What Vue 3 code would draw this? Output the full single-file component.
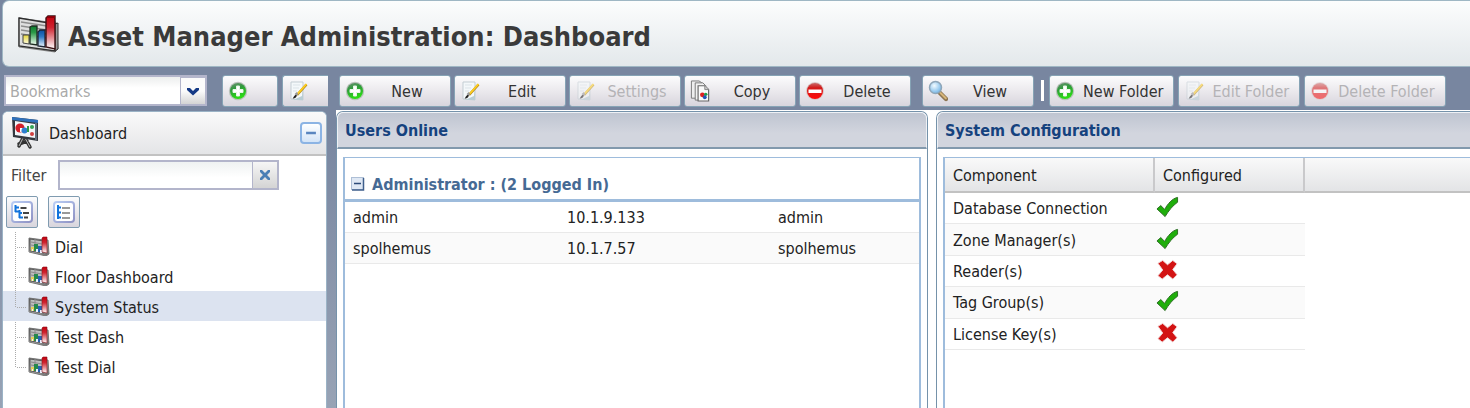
<script setup>
import { ref } from 'vue'

const bookmark = ref('')
const filter = ref('')

const actions = [
  { label: 'New', icon: 'add' },
  { label: 'Edit', icon: 'edit' },
  { label: 'Settings', icon: 'edit', disabled: true },
  { label: 'Copy', icon: 'copy' },
  { label: 'Delete', icon: 'remove' },
]

const folderActions = [
  { label: 'New Folder', icon: 'add' },
  { label: 'Edit Folder', icon: 'edit', disabled: true },
  { label: 'Delete Folder', icon: 'remove', disabled: true },
]

const tree = [
  { label: 'Dial' },
  { label: 'Floor Dashboard' },
  { label: 'System Status', selected: true, last: true },
  { label: 'Test Dash' },
  { label: 'Test Dial', last: true },
]

const users = [
  { name: 'admin', ip: '10.1.9.133', login: 'admin' },
  { name: 'spolhemus', ip: '10.1.7.57', login: 'spolhemus' },
]

const components = [
  { name: 'Database Connection', ok: true },
  { name: 'Zone Manager(s)', ok: true },
  { name: 'Reader(s)', ok: false },
  { name: 'Tag Group(s)', ok: true },
  { name: 'License Key(s)', ok: false },
]
</script>

<template>
  <div class="app">
    <svg class="defs" aria-hidden="true">
      <defs>
        <linearGradient id="g-red" x1="0" y1="0" x2="0" y2="1">
          <stop offset="0" stop-color="#c2000d" />
          <stop offset=".35" stop-color="#cf2430" />
          <stop offset="1" stop-color="#fff" />
        </linearGradient>
        <linearGradient id="g-green" x1="0" y1="0" x2="0" y2="1">
          <stop offset="0" stop-color="#0b7a2c" />
          <stop offset=".35" stop-color="#2c9a48" />
          <stop offset="1" stop-color="#f4fff4" />
        </linearGradient>
        <linearGradient id="g-blue" x1="0" y1="0" x2="0" y2="1">
          <stop offset="0" stop-color="#0a4fa0" />
          <stop offset=".4" stop-color="#2f79c4" />
          <stop offset="1" stop-color="#f0f8ff" />
        </linearGradient>
        <linearGradient id="g-yellow" x1="0" y1="0" x2="0" y2="1">
          <stop offset="0" stop-color="#e6d63a" />
          <stop offset="1" stop-color="#fffde0" />
        </linearGradient>
        <linearGradient id="g-add" x1="0" y1="0" x2="0.300" y2="1">
          <stop offset="0" stop-color="#6f8f76" />
          <stop offset=".4" stop-color="#2f9a3c" />
          <stop offset="1" stop-color="#2bdc14" />
        </linearGradient>
        <linearGradient id="g-remove" x1="0" y1="0" x2="0" y2="1">
          <stop offset="0" stop-color="#c86a6a" />
          <stop offset=".3" stop-color="#d21a1a" />
          <stop offset="1" stop-color="#ff0a0a" />
        </linearGradient>
        <radialGradient id="g-lens" cx=".4" cy=".35" r=".7">
          <stop offset="0" stop-color="#f2fbff" />
          <stop offset="1" stop-color="#6db2e6" />
        </radialGradient>
        <linearGradient id="g-metal" x1="0" y1="0" x2="1" y2="1">
          <stop offset="0" stop-color="#444" />
          <stop offset=".4" stop-color="#b8b8b8" />
          <stop offset="1" stop-color="#666" />
        </linearGradient>
        <linearGradient id="g-tile" x1="0" y1="0" x2="1" y2="1">
          <stop offset="0" stop-color="#b9cdf5" />
          <stop offset="1" stop-color="#8f92c4" />
        </linearGradient>
      </defs>
      <symbol id="chart-large" viewBox="0 0 42 38">
        <path d="M2 3 L31 7 L39 7 L41 34 L38 37 L2 32z" fill="#c4c4c4" stroke="#8a8a8a" />
        <path d="M2 3 L38 9 L38 36 L2 31z" fill="#dedede" stroke="#2e2e2e" stroke-width="1.4" />
        <path d="M38 9 L41 8 L41 34 L38 36z" fill="#999" stroke="#333" />
        <path d="M4 7l26 4M4 11l26 4M4 15l26 4M4 19l26 4" stroke="#8d8d8d" stroke-width="1.3" />
        <path d="M6 20h6v9l-6-1z" fill="url(#g-yellow)" stroke="#444" />
        <path d="M13 12l2-1h5v19l-7-1z" fill="url(#g-green)" stroke="#1d2b20" stroke-width="1.3" />
        <path d="M21 17l2-2h5v17l-7-1z" fill="url(#g-blue)" stroke="#1c2636" stroke-width="1.3" />
        <path d="M29 3l2-2h7v33l-9-2z" fill="url(#g-red)" stroke="#3a1013" stroke-width="1.4" />
        <path d="M29 3l2-2h7v2z" fill="#8e0009" />
      </symbol>
      <symbol id="chart-small" viewBox="0 0 22 20">
        <path d="M1 2l15 2 4 0 1 14-3 2-17-4z" fill="url(#g-metal)" stroke="#777" />
        <path d="M2 3l14 2v12L2 15z" fill="#bdbdbd" stroke="#5c5c5c" />
        <path d="M3 6l11 2M3 9l11 2M7 3v12" stroke="#8a8a8a" />
        <path d="M3 11h3v4H3z" fill="#e1cf5a" />
        <path d="M6 8h4v7H6z" fill="#25894a" />
        <path d="M10 10h4v6h-4z" fill="#2562b0" />
        <path d="M8 13h2v3H8zM12 14h2v3h-2zM4 13h1v2H4z" fill="#e8f0ff" />
        <path d="M14 2l1-1h4v16l-5-1z" fill="url(#g-red)" stroke="#8e1620" stroke-width=".6" />
      </symbol>
      <symbol id="add" viewBox="0 0 20 20">
        <circle cx="10" cy="10" r="9.200" fill="#b9c1ba" />
        <circle cx="10" cy="10" r="8" fill="url(#g-add)" />
        <path d="M8.500 5h3v3.500H15v3h-3.500V15h-3v-3.500H5v-3h3.500z" fill="#fff" stroke="#e6f5e6" />
      </symbol>
      <symbol id="remove" viewBox="0 0 20 20">
        <circle cx="10" cy="10" r="9" fill="#d9c5c5" />
        <circle cx="10" cy="10" r="8" fill="url(#g-remove)" />
        <path d="M3.500 8.500h13v3.500h-13z" fill="#fff" />
      </symbol>
      <symbol id="edit" viewBox="0 0 20 20">
        <path d="M3 1h12v18l-12-1z" fill="#f4f8fa" stroke="#c3cdd3" />
        <path d="M15 8v11H5l9-4z" fill="#b9cdd4" />
        <path d="M5 4h7M5 7h6M5 10h4" stroke="#dbe3e8" />
        <path d="M18.500 3.500L9 14" stroke="#b5891d" stroke-width="2.600" />
        <path d="M18.500 3L9.500 13" stroke="#ffcf1f" stroke-width="1.800" />
        <path d="M9.500 12l-2 2" stroke="#999" stroke-width="2.500" />
        <path d="M8.500 14c.6 2-1.200 3.600-4 3.600 1.200-1 1.500-4 4-3.600z" fill="#222" />
      </symbol>
      <symbol id="copy" viewBox="0 0 20 23">
        <path d="M1 1h8l3 2v16H1z" fill="#eee" stroke="#777" />
        <path d="M5 3h8l3 3v15H5z" fill="#f2f2f2" stroke="#777" />
        <path d="M8 6h7l4 4v12H8z" fill="#fafafa" stroke="#666" stroke-width="1.200" />
        <path d="M15 6v4h4" fill="#ccc" stroke="#888" />
        <circle cx="12.500" cy="15.500" r="2.500" fill="#e02020" />
        <circle cx="16" cy="15" r="1.800" fill="#20a04a" />
        <circle cx="15" cy="18" r="2" fill="#2456b8" />
      </symbol>
      <symbol id="view" viewBox="0 0 20 20">
        <path d="M11 11l7 7" stroke="#8d7552" stroke-width="4.400" stroke-linecap="round" />
        <path d="M12.500 12l5.300 5.300" stroke="#d6b57a" stroke-width="2" stroke-linecap="round" />
        <circle cx="7.500" cy="6.500" r="6" fill="url(#g-lens)" stroke="#8fa6b8" stroke-width="1.500" />
      </symbol>
      <symbol id="board" viewBox="0 0 28 34">
        <path d="M12 22l-4 8M14 22l5 9M8 28l8-3" stroke="#333" stroke-width="3.500" fill="none" stroke-linecap="round" />
        <path d="M12 22l-4 8M14 22l5 9" stroke="#bbb" fill="none" />
        <path d="M1 1l26 3v21L2 21z" fill="#33383f" />
        <path d="M1 1l26 3v3L1 4z" fill="#2f70ba" />
        <path d="M4 5l20 3v14L4 19z" fill="#f2f6fa" />
        <path d="M25 7v17" stroke="#8ea4bc" />
        <circle cx="9" cy="12" r="4.600" fill="#d3202a" />
        <path d="M9 12h4a4 4 0 0 1-4 4z" fill="#fff" />
        <circle cx="13.500" cy="14.500" r="3" fill="#2c7fd0" />
        <path d="M17 10v6" stroke="#2a9a4a" stroke-width="2" />
        <circle cx="21" cy="11" r="2" fill="#35a556" />
        <circle cx="21" cy="18" r="2" fill="#d04040" />
      </symbol>
      <symbol id="expand-tree" viewBox="0 0 22 22">
        <rect x="1" y="1" width="20" height="20" rx="3" fill="#fff" stroke="url(#g-tile)" stroke-width="2" />
        <path d="M4.500 4v7M4 6.500h4M8.500 9v8M4 10.500h5M8 12h3M8 16.500h4" stroke="#1273dc" stroke-width="2" fill="none" />
        <path d="M9.500 7h6M12 12h6M13 16.500h4" stroke="#444" stroke-width="2" />
      </symbol>
      <symbol id="collapse-tree" viewBox="0 0 22 22">
        <rect x="1" y="1" width="20" height="20" rx="3" fill="#fff" stroke="url(#g-tile)" stroke-width="2" />
        <path d="M5 4v14M4 6.500h4M4 11.500h4M4 16.500h4" stroke="#1273dc" stroke-width="2" fill="none" />
        <path d="M9 7h8M9 12h8M9 17h8" stroke="#777" stroke-width="1.600" />
      </symbol>
      <symbol id="tick" viewBox="0 0 24 22">
        <path d="M1 13l4-3.500 4 4C12 8 17 2 22.500 1v5C18 9 13 15 9.500 21z" fill="#1fae0b" stroke="#2b6b22" />
      </symbol>
      <symbol id="cross" viewBox="0 0 24 22">
        <path d="M2 4l5-3 5 4.500L17.500 1 22 4.500 17.500 10.500 22 16l-4.500 4.500-5.500-4.500-5.500 4.500L2 17l5-6z" fill="#d31313" stroke="#f0d6d6" />
      </symbol>
    </svg>

    <header class="title-bar">
      <svg class="title-icon" aria-hidden="true"><use href="#chart-large" /></svg>
      <h1>Asset Manager Administration: Dashboard</h1>
    </header>

    <div class="layout">
      <aside class="side">
        <div class="bar">
          <div class="combo">
            <select v-model="bookmark" aria-label="Bookmarks">
              <option value="">Bookmarks</option>
            </select>
            <span class="trigger" aria-hidden="true">
              <svg viewBox="0 0 14 9"><path d="M1 1h3l3 3 3-3h3v2L7 8.500 1 3z" fill="#153a86" /></svg>
            </span>
          </div>
          <button class="btn add-mark" type="button" aria-label="Add bookmark">
            <svg class="icon" aria-hidden="true"><use href="#add" /></svg>
          </button>
          <button class="btn edit-mark" type="button" aria-label="Edit bookmark">
            <svg class="icon" aria-hidden="true"><use href="#edit" /></svg>
          </button>
        </div>

        <section class="nav">
          <div class="nav-head">
            <svg class="board" aria-hidden="true"><use href="#board" /></svg>
            <h2>Dashboard</h2>
            <button class="collapse" type="button" aria-label="Collapse panel">
              <svg viewBox="0 0 22 22" aria-hidden="true"><path d="M5 11h12" stroke="#5a86c0" stroke-width="3" /></svg>
            </button>
          </div>
          <div class="filter">
            <label for="tree-filter">Filter</label>
            <div class="filter-field">
              <input id="tree-filter" v-model="filter" type="text" />
              <button type="button" aria-label="Clear filter" @click="filter = ''">
                <svg viewBox="0 0 12 12" aria-hidden="true"><path d="M1 1l2 0 3 3 3-3h2v2L8 6l3 3v2H9L6 8l-3 3H1V9l3-3-3-3z" fill="#4a7fb5" /></svg>
              </button>
            </div>
          </div>
          <div class="tree-tools">
            <button type="button" aria-label="Expand all"><svg aria-hidden="true"><use href="#expand-tree" /></svg></button>
            <button type="button" aria-label="Collapse all"><svg aria-hidden="true"><use href="#collapse-tree" /></svg></button>
          </div>
          <ul class="tree">
            <li v-for="item in tree" :key="item.label" :class="{ selected: item.selected }">
              <a href="#">
                <svg class="elbow" viewBox="0 0 13 30" aria-hidden="true">
                  <path :d="item.last ? 'M.5 1V17M2 16.500H12' : 'M.5 1V30M2 16.500H12'" />
                </svg>
                <svg class="leaf" aria-hidden="true"><use href="#chart-small" /></svg>
                <span>{{ item.label }}</span>
              </a>
            </li>
          </ul>
        </section>
      </aside>

      <main class="main">
        <div class="bar">
          <button v-for="a in actions" :key="a.label" class="btn" type="button" :disabled="a.disabled">
            <svg class="icon" aria-hidden="true"><use :href="'#' + a.icon" /></svg>
            <span>{{ a.label }}</span>
          </button>
          <button class="btn view" type="button">
            <svg class="icon" aria-hidden="true"><use href="#view" /></svg>
            <span>View</span>
          </button>
          <span class="separator"></span>
          <button v-for="a in folderActions" :key="a.label" class="btn folder" type="button" :disabled="a.disabled">
            <svg class="icon" aria-hidden="true"><use :href="'#' + a.icon" /></svg>
            <span>{{ a.label }}</span>
          </button>
        </div>

        <div class="panels">
          <section class="panel">
            <h2>Users Online</h2>
            <div class="box">
              <button class="group" type="button">
                <svg viewBox="0 0 14 14" aria-hidden="true">
                  <rect x=".5" y=".5" width="12" height="12" fill="#dfe8f4" stroke="#aebfd6" />
                  <path d="M12.500 1v12H1" fill="none" stroke="#3f5f8c" stroke-width="1.500" />
                  <path d="M3 6.500h7" stroke="#2c4a78" stroke-width="1.500" />
                </svg>
                <span>Administrator : (2 Logged In)</span>
              </button>
              <table class="users">
                <colgroup><col class="u1" /><col class="u2" /><col /></colgroup>
                <tbody>
                  <tr v-for="u in users" :key="u.name">
                    <td>{{ u.name }}</td>
                    <td>{{ u.ip }}</td>
                    <td>{{ u.login }}</td>
                  </tr>
                </tbody>
              </table>
            </div>
          </section>

          <section class="panel open">
            <h2>System Configuration</h2>
            <div class="box">
              <table class="config">
                <colgroup><col class="c1" /><col class="c2" /><col /></colgroup>
                <thead>
                  <tr><th scope="col">Component</th><th scope="col">Configured</th><td></td></tr>
                </thead>
                <tbody>
                  <tr v-for="c in components" :key="c.name">
                    <td>{{ c.name }}</td>
                    <td class="state">
                      <svg role="img" :aria-label="c.ok ? 'Yes' : 'No'"><use :href="c.ok ? '#tick' : '#cross'" /></svg>
                    </td>
                    <td class="rest"></td>
                  </tr>
                </tbody>
              </table>
            </div>
          </section>
        </div>
      </main>
    </div>
  </div>
</template>

<style>
body {
  margin: 0;
  background: #7886a0;
}
</style>

<style scoped>
* {
  box-sizing: border-box;
}
.app {
  display: flex;
  flex-direction: column;
  min-height: 100vh;
  overflow: hidden;
  background: linear-gradient(#7886a0 30%, #98a3b5);
  color: #222;
  font-family: 'DejaVu Sans Condensed', 'Noto Sans', sans-serif;
  font-size: 16px;
  line-height: 20px;
}
button,
input,
select {
  font: inherit;
  color: inherit;
  margin: 0;
  padding: 0;
}
.defs {
  position: absolute;
  width: 0;
  height: 0;
}
h1,
h2 {
  margin: 0;
}
.title-bar {
  display: flex;
  align-items: center;
  gap: 9px;
  height: 67px;
  margin-left: 2px;
  padding: 0 14px;
  border: 1px solid #9fb7c4;
  border-right: 0;
  border-radius: 7px 0 0 7px;
  background: linear-gradient(#fcfdfd, #e3e8eb);
}
.title-icon {
  width: 42px;
  height: 38px;
}
h1 {
  color: #3a3a3a;
  font-size: 27px;
  line-height: 36px;
  padding-top: 6px;
  white-space: nowrap;
}
.layout {
  display: flex;
  flex: 1;
}
.side {
  display: flex;
  flex-direction: column;
  width: 328px;
  flex: none;
}
.bar {
  display: flex;
  align-items: center;
  height: 43px;
  gap: 4px;
  padding-top: 4px;
}
.side .bar {
  padding-left: 4px;
}
.combo {
  position: relative;
  width: 203px;
  height: 31px;
  margin-right: 11px;
}
.combo select {
  width: 100%;
  height: 100%;
  padding: 2px 30px 0 4px;
  appearance: none;
  border: 2px solid #b3b5cb;
  border-radius: 0;
  background: linear-gradient(#eceeee, #fff 40%);
  color: #aaa;
}
.trigger {
  position: absolute;
  top: 1px;
  right: 0;
  bottom: 0;
  display: flex;
  align-items: center;
  justify-content: center;
  width: 27px;
  border: 2px solid #b3b5cb;
  border-left-width: 1px;
  background: linear-gradient(#fbfbfb 50%, #d4d4d4);
  pointer-events: none;
}
.trigger svg {
  width: 14px;
  height: 9px;
}
.btn {
  display: flex;
  align-items: center;
  min-width: 112px;
  height: 32px;
  padding: 0 9px 0 5px;
  border: 1px solid #86a3b5;
  border-radius: 3px;
  background: linear-gradient(#fcfcfd, #ebe9ed 50%, #d8d5dd);
  color: #333;
  white-space: nowrap;
}
.main .btn + .btn {
  margin-left: -1px;
}
.btn span {
  flex: 1;
  padding: 2px 0 0 8px;
  text-align: center;
}
.main .btn.folder {
  margin-left: 0;
  padding-right: 10px;
}
.btn:disabled {
  color: #b4b3b6;
}
.btn:disabled .icon {
  opacity: .55;
}
.icon {
  flex: none;
  width: 20px;
  height: 22px;
}
.add-mark {
  min-width: 56px;
}
.edit-mark {
  flex: 1;
  min-width: 0;
  border-right: 0;
  border-radius: 3px 0 0 3px;
}
.main .bar {
  padding-left: 3px;
}
.main .btn.view {
  margin-left: 7px;
}
.separator {
  width: 3px;
  height: 21px;
  margin: 0 1px 0 3px;
  background: #fff;
}
.nav {
  flex: 1;
  margin: 1px 1px 0 2px;
  border: 1px solid #9bb3c6;
  border-bottom: 0;
  border-radius: 6px 6px 0 0;
  background: #fff;
  overflow: hidden;
}
.nav-head {
  display: flex;
  align-items: center;
  gap: 10px;
  height: 44px;
  padding: 0 4px 0 8px;
  border-bottom: 2px solid #c2c2c2;
  background: linear-gradient(#fafafa, #e4e5e7);
}
.board {
  width: 28px;
  height: 34px;
}
.nav-head h2 {
  flex: 1;
  padding-top: 2px;
  font-size: 16px;
  font-weight: 400;
}
.collapse {
  width: 22px;
  height: 22px;
  border: 2px solid #8cb4e4;
  border-radius: 4px;
  background: linear-gradient(#fff, #d4e4f7);
}
.collapse svg {
  display: block;
  width: 18px;
  height: 18px;
}
.filter {
  display: flex;
  align-items: center;
  justify-content: space-between;
  padding: 4px 47px 0 8px;
}
.filter label {
  padding-top: 2px;
  color: #444;
}
.filter-field {
  display: flex;
  width: 221px;
  height: 30px;
  border: 2px solid #b3b5cb;
}
.filter-field input {
  flex: 1;
  min-width: 0;
  border: 0;
  background: linear-gradient(#eff2f2, #fff 60%);
}
.filter-field button {
  width: 25px;
  border: 0;
  border-left: 1px solid #b3b5cb;
  background: linear-gradient(#f6f6f6, #d4d4d4);
}
.filter-field svg {
  display: block;
  width: 12px;
  height: 12px;
  margin: 0 auto;
}
.tree-tools {
  display: flex;
  gap: 10px;
  padding: 6px 3px 3px;
}
.tree-tools button {
  display: flex;
  align-items: center;
  justify-content: center;
  width: 32px;
  height: 32px;
  border: 1px solid #7f9bb0;
  border-radius: 2px;
  background: linear-gradient(#fcfcfd, #d8d5dd);
}
.tree-tools svg {
  width: 22px;
  height: 22px;
}
.tree {
  margin: 0;
  padding: 0;
  list-style: none;
}
.tree a {
  display: flex;
  align-items: center;
  height: 30px;
  padding-left: 12px;
  color: #222;
  text-decoration: none;
}
.tree span {
  padding-top: 3px;
}
.tree .selected {
  background: #dce3f0;
}
.elbow {
  width: 13px;
  height: 30px;
}
.elbow path {
  fill: none;
  stroke: #aaa;
  stroke-dasharray: 1 1;
}
.leaf {
  width: 22px;
  height: 20px;
  margin-right: 5px;
}
.main {
  display: flex;
  flex: 1;
  flex-direction: column;
  min-width: 0;
  margin-left: 8px;
}
.panels {
  display: grid;
  grid-template-columns: 592fr 534fr;
  gap: 8px;
  flex: 1;
  background: #fff;
}
.panel {
  display: flex;
  flex-direction: column;
  min-width: 0;
  margin-top: 1px;
  border: 1px solid #7592aa;
  border-bottom: 0;
  border-radius: 7px 7px 0 0;
  overflow: hidden;
}
.panel h2 {
  height: 37px;
  padding: 6px 7px 4px;
  border: 1px solid #eef1f5;
  border-bottom: 2px solid #8299ad;
  border-radius: 6px 6px 0 0;
  background: linear-gradient(#bfc5d1, #d2d5de 60%);
  color: #15427e;
  font-size: 16px;
  line-height: 24px;
}
.panel.open,
.open h2 {
  border-right: 0;
  border-top-right-radius: 0;
}
.box {
  flex: 1;
  margin: 8px 6px 0;
  border: 2px solid #9ebcdc;
  border-top-width: 1px;
  border-bottom: 0;
}
.open .box {
  margin-right: 0;
  border-right: 0;
}
.group {
  display: flex;
  align-items: center;
  gap: 7px;
  width: 100%;
  height: 44px;
  padding: 10px 6px 0;
  border: 0;
  border-bottom: 3px solid #9ebcdc;
  background: #fff;
  color: #466a94;
  font-weight: 700;
}
.group svg {
  width: 14px;
  height: 14px;
}
.group span {
  padding-top: 2px;
}
table {
  width: 100%;
  border-collapse: separate;
  border-spacing: 0;
  table-layout: fixed;
}
td,
th {
  padding: 2px 8px 0;
  font-weight: 400;
  text-align: left;
}
.users td {
  height: 31px;
}
.u1 {
  width: 214px;
}
.u2 {
  width: 211px;
}
.config {
  height: 192px;
}
.c1 {
  width: 210px;
}
.c2 {
  width: 150px;
}
.config thead tr > * {
  height: 35px;
  border-right: 2px solid #c9c9cb;
  border-bottom: 2px solid #c2c2c2;
  background: linear-gradient(#f9f9f9, #e3e4e6);
}
.config thead tr > td {
  border-right: 0;
}
tbody td {
  border-bottom: 1px solid #e9e9e9;
}
tbody tr:nth-child(even) td {
  background: #fafafa;
}
tbody tr:nth-child(n) .rest {
  border: 0;
  background: #fff;
}
.config .state {
  padding: 0 1px 2px;
}
.state svg {
  display: block;
  width: 23px;
  height: 22px;
}
</style>
